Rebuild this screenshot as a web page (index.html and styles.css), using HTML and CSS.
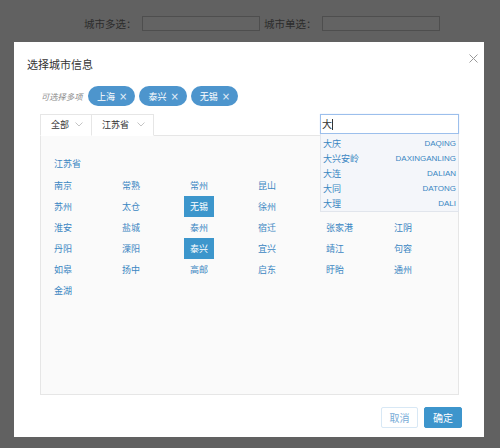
FILE: index.html
```html
<!DOCTYPE html>
<html lang="zh">
<head>
<meta charset="utf-8">
<title>选择城市信息</title>
<link rel="stylesheet" href="styles.css">
</head>
<body>
<div class="topbar">
  <label class="field-label">城市多选：</label><span class="field-input"></span>
  <label class="field-label">城市单选：</label><span class="field-input"></span>
</div>

<div class="modal">
  <div class="modal-head">
    <div class="modal-title">选择城市信息</div>
    <svg class="close" width="9" height="9" viewBox="0 0 9 9"><path d="M0.5 0.5 L8.5 8.5 M8.5 0.5 L0.5 8.5" stroke="#9a9a9a" stroke-width="1" fill="none"/></svg>
  </div>

  <div class="tags-row">
    <span class="hint">可选择多项</span>
    <span class="tag">上海<i class="x">×</i></span>
    <span class="tag">泰兴<i class="x">×</i></span>
    <span class="tag">无锡<i class="x">×</i></span>
  </div>

  <div class="tab-row">
    <div class="tabs">
      <div class="tab tab-all">全部<svg class="chev" width="8" height="5" viewBox="0 0 8 5"><path d="M0.5 0.5 L4 4 L7.5 0.5" stroke="#c4c4c4" fill="none"/></svg></div>
      <div class="tab tab-prov">江苏省<svg class="chev" width="8" height="5" viewBox="0 0 8 5"><path d="M0.5 0.5 L4 4 L7.5 0.5" stroke="#c4c4c4" fill="none"/></svg></div>
    </div>
    <div class="search-wrap">
      <div class="search">大<span class="caret"></span></div>
      <ul class="suggest">
        <li><span>大庆</span><span class="py">DAQING</span></li>
        <li><span>大兴安岭</span><span class="py">DAXINGANLING</span></li>
        <li><span>大连</span><span class="py">DALIAN</span></li>
        <li><span>大同</span><span class="py">DATONG</span></li>
        <li><span>大理</span><span class="py">DALI</span></li>
      </ul>
    </div>
  </div>

  <div class="panel">
    <div class="prov">江苏省</div>
    <div class="cities">
      <span class="city">南京</span><span class="city">常熟</span><span class="city">常州</span><span class="city">昆山</span><span class="city empty"></span><span class="city empty"></span>
      <span class="city">苏州</span><span class="city">太仓</span><span class="city on">无锡</span><span class="city">徐州</span><span class="city empty"></span><span class="city empty"></span>
      <span class="city">淮安</span><span class="city">盐城</span><span class="city">泰州</span><span class="city">宿迁</span><span class="city">张家港</span><span class="city">江阴</span>
      <span class="city">丹阳</span><span class="city">溧阳</span><span class="city on">泰兴</span><span class="city">宜兴</span><span class="city">靖江</span><span class="city">句容</span>
      <span class="city">如皋</span><span class="city">扬中</span><span class="city">高邮</span><span class="city">启东</span><span class="city">盱眙</span><span class="city">通州</span>
      <span class="city">金湖</span>
    </div>
  </div>

  <div class="footer">
    <button class="btn btn-cancel">取消</button>
    <button class="btn btn-ok">确定</button>
  </div>
</div>
</body>
</html>
```

FILE: styles.css
```css
* { box-sizing: border-box; }
html, body { margin: 0; padding: 0; }
body {
  width: 500px;
  height: 448px;
  background: #616161;
  font-family: "Noto Sans CJK SC", "Noto Sans", sans-serif;
  position: relative;
  overflow: hidden;
}
.topbar {
  display: flex;
  align-items: center;
  padding: 16px 0 0 84px;
  height: 31px;
}
.field-label {
  font-size: 10.5px;
  color: #2c2c2c;
  line-height: 15px;
  width: 58px;
}
.field-label + .field-input { margin-right: 4px; }
.field-input {
  display: block;
  width: 118px;
  height: 15px;
  border: 1px solid #4e4e4e;
  background: #636363;
}

.modal {
  position: absolute;
  left: 14px;
  top: 42px;
  width: 470px;
  height: 395px;
  background: #fff;
  padding: 15px 22px 0 26px;
}
.modal-head {
  display: flex;
  justify-content: space-between;
  align-items: flex-start;
  margin-left: -13px;
  margin-right: -16px;
}
.modal-title {
  font-size: 11px;
  line-height: 14px;
  color: #333;
}
.close { display: block; margin-top: -3px; }

.tags-row {
  display: flex;
  align-items: center;
  margin-top: 15px;
  height: 20px;
  margin-left: 1px;
}
.hint {
  font-size: 8.3px;
  font-style: italic;
  color: #8a8a8a;
  margin-right: 6px;
  width: 41px;
  white-space: nowrap;
}
.tag {
  display: inline-flex;
  align-items: center;
  height: 20px;
  border-radius: 10px;
  background: #4d95cd;
  color: #fff;
  font-size: 9px;
  padding: 0 8px 0 9px;
  margin-right: 4px;
}
.tag .x {
  font-style: normal;
  font-family: "DejaVu Sans", sans-serif;
  font-size: 10px;
  margin-left: 4px;
  color: #e4eef8;
}

.tab-row {
  display: flex;
  justify-content: space-between;
  align-items: flex-start;
  margin-top: 8px;
  height: 21px;
  margin-right: 3px;
  position: relative;
  z-index: 2;
}
.tabs { display: flex; }
.tab {
  display: flex;
  align-items: center;
  height: 22px;
  border: 1px solid #e6e6e6;
  background: #fff;
  font-size: 9px;
  color: #333;
  padding: 0 0 1px 10px;
}
.tab-all { width: 52px; border-bottom-color: #fff; }
.tab-prov { width: 62px; border-left: none; border-bottom-color: #fff; }
.chev { margin-left: auto; margin-right: 8px; }

.search-wrap {
  position: relative;
  width: 139px;
}
.search {
  height: 20px;
  border: 1px solid #9cbfec;
  box-shadow: 0 0 1px #c9dcf5;
  background: #fff;
  font-size: 10px;
  color: #333;
  line-height: 18px;
  padding-left: 1px;
  display: flex;
  align-items: center;
}
.caret {
  display: inline-block;
  width: 1px;
  height: 11px;
  background: #333;
  margin-left: 0;
}
.suggest {
  position: absolute;
  top: 20px;
  left: 0;
  width: 139px;
  margin: 0;
  padding: 2px 0 0;
  list-style: none;
  background: #f4f6fa;
  border: 1px solid #e1e5ec;
  border-top: none;
}
.suggest li {
  display: flex;
  justify-content: space-between;
  height: 15px;
  line-height: 15px;
  font-size: 9px;
  color: #3a86c2;
  padding: 0 2px 0 2px;
}
.suggest .py {
  font-family: "Liberation Sans", Arial, sans-serif;
  font-size: 8px;
}

.panel {
  height: 260px;
  border: 1px solid #e6e6e6;
  background: #fafafa;
  margin-right: 3px;
  padding: 17px 0 0 7px;
}
.prov {
  font-size: 9px;
  color: #3a86c2;
  line-height: 22px;
  padding-left: 6px;
}
.cities {
  display: grid;
  grid-template-columns: repeat(6, 68px);
  grid-auto-rows: 21px;
}
.city {
  justify-self: start;
  font-size: 9px;
  color: #3a86c2;
  line-height: 21px;
  padding: 0 6px;
}
.city.on {
  background: #3c96cc;
  color: #fff;
}

.footer {
  display: flex;
  justify-content: flex-end;
  margin-top: 12px;
  gap: 6px;
}
.btn {
  height: 21px;
  font-family: "Noto Sans CJK SC", sans-serif;
  font-size: 10px;
  padding: 0;
  border-radius: 2px;
  cursor: pointer;
}
.btn-cancel {
  width: 37px;
  background: #fff;
  border: 1px solid #d8e8f5;
  color: #78acd7;
}
.btn-ok {
  width: 38px;
  background: #3d95cc;
  border: 1px solid #3d95cc;
  color: #fff;
}
```
